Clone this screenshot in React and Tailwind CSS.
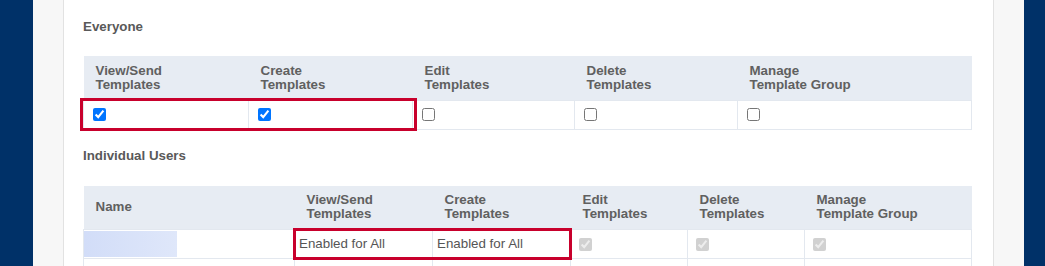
import React from "react";

const everyoneCols = [
  { label: ["View/Send", "Templates"], w: "w-[165px]", checked: true },
  { label: ["Create", "Templates"], w: "w-[164px]", checked: true },
  { label: ["Edit", "Templates"], w: "w-[162px]", checked: false },
  { label: ["Delete", "Templates"], w: "w-[163px]", checked: false },
  { label: ["Manage", "Template Group"], w: "", checked: false },
];

const userCols = [
  { label: ["View/Send", "Templates"], w: "w-[138px]" },
  { label: ["Create", "Templates"], w: "w-[138px]" },
  { label: ["Edit", "Templates"], w: "w-[117px]" },
  { label: ["Delete", "Templates"], w: "w-[117px]" },
  { label: ["Manage", "Template Group"], w: "" },
];

const HeadCell = ({ label, w }) => (
  <th
    className={`${w} h-[44px] px-[12px] text-left align-middle font-bold text-[13.33px] leading-[14px] text-[#606060]`}
  >
    {label[0]}
    <br />
    {label[1]}
  </th>
);

const App = () => {
  return (
    <div
      className="flex h-[266px] w-[1045px] overflow-hidden bg-white"
      style={{ fontFamily: '"Liberation Sans", Arial, sans-serif' }}
    >
      <div className="w-[33px] shrink-0 bg-[#003168]" />
      <div className="w-[31px] shrink-0 border-r border-[#e2e2e2] bg-[#f7f7f7]" />

      <div className="w-[929px] shrink-0 px-[19px] pt-[19px]">
        <h3 className="text-[13.33px] font-bold leading-[15px] text-[#595959]">
          Everyone
        </h3>

        <div className="relative mt-[22px]">
          <table className="w-[889px] table-fixed border-collapse">
            <thead>
              <tr className="bg-[#e7ecf3]">
                {everyoneCols.map((c) => (
                  <HeadCell key={c.label.join()} label={c.label} w={c.w} />
                ))}
              </tr>
            </thead>
            <tbody>
              <tr className="h-[29px] bg-white">
                {everyoneCols.map((c) => (
                  <td
                    key={c.label.join()}
                    className="border border-[#e3e8ef] px-[9px] align-middle"
                  >
                    <input
                      type="checkbox"
                      defaultChecked={c.checked}
                      className="m-0 block h-[13px] w-[13px]"
                    />
                  </td>
                ))}
              </tr>
            </tbody>
          </table>
          {/* highlight */}
          <div className="pointer-events-none absolute left-[-3px] top-[42px] h-[33px] w-[337px] border-[3px] border-[#c8002c]" />
        </div>

        <h3 className="mt-[18px] text-[13.33px] font-bold leading-[15px] text-[#595959]">
          Individual Users
        </h3>

        <div className="relative mt-[23px]">
          <table className="w-[889px] table-fixed border-collapse">
            <thead>
              <tr className="bg-[#e7ecf3]">
                <th className="w-[211px] h-[44px] px-[12px] text-left align-middle font-bold text-[13.33px] leading-[14px] text-[#606060]">
                  Name
                </th>
                {userCols.map((c) => (
                  <HeadCell key={c.label.join()} label={c.label} w={c.w} />
                ))}
              </tr>
            </thead>
            <tbody>
              <tr className="h-[29px] bg-white">
                <td className="border border-[#e3e8ef] p-0 align-middle">
                  <div className="h-[26px] w-[93px] bg-gradient-to-r from-[#d2ddf8] to-[#dfe7fa]" />
                </td>
                <td className="border border-[#e3e8ef] px-[4px] align-middle text-[13.33px] text-[#555]">
                  Enabled for All
                </td>
                <td className="border border-[#e3e8ef] px-[4px] align-middle text-[13.33px] text-[#555]">
                  Enabled for All
                </td>
                {[0, 1, 2].map((i) => (
                  <td
                    key={i}
                    className="border border-[#e3e8ef] px-[8px] align-middle"
                  >
                    <input
                      type="checkbox"
                      checked
                      disabled
                      readOnly
                      className="m-0 block h-[13px] w-[13px]"
                    />
                  </td>
                ))}
              </tr>
              <tr className="h-[29px] bg-white">
                {[0, 1, 2, 3, 4, 5].map((i) => (
                  <td key={i} className="border border-[#e3e8ef]" />
                ))}
              </tr>
            </tbody>
          </table>
          {/* highlight */}
          <div className="pointer-events-none absolute left-[210px] top-[42px] h-[32px] w-[279px] border-[3px] border-[#c8002c]" />
        </div>
      </div>

      <div className="w-[31px] shrink-0 border-l border-[#e2e2e2] bg-[#f7f7f7]" />
      <div className="flex-1 bg-[#003168]" />
    </div>
  );
};

export default App;
